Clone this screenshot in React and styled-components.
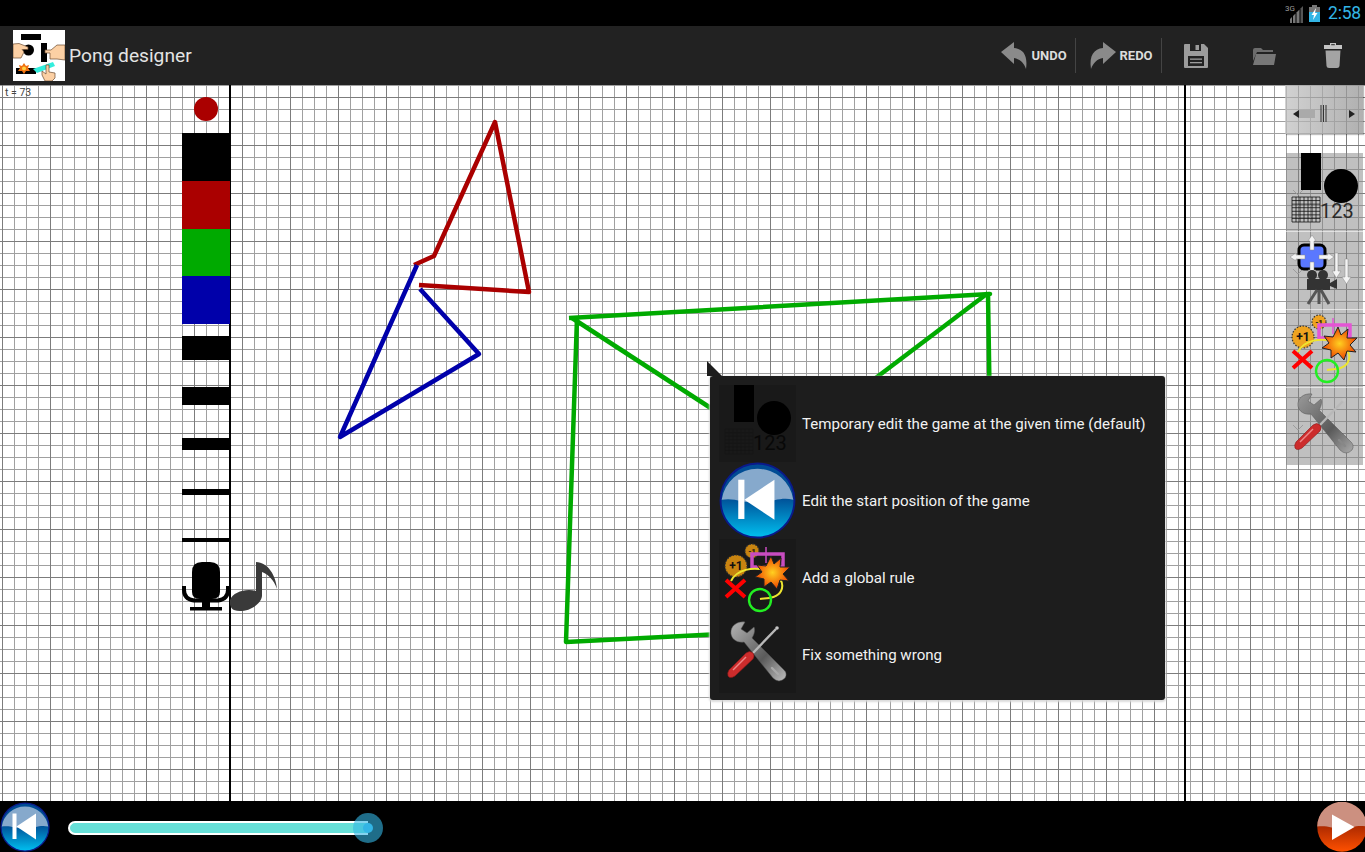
import React from "react";
import styled, { createGlobalStyle } from "styled-components";

const GlobalStyle = createGlobalStyle`
  html, body {
    margin: 0;
    padding: 0;
    background: #000;
    overflow: hidden;
  }
  body {
    font-family: Roboto, "Liberation Sans", sans-serif;
  }
`;

const Screen = styled.div`
  width: 1365px;
  height: 852px;
  display: flex;
  flex-direction: column;
  overflow: hidden;
`;

const StatusBar = styled.div`
  height: 26px;
  background: #000;
  display: flex;
  justify-content: flex-end;
  align-items: center;
  padding-right: 4px;
`;

const SignalBox = styled.div`
  position: relative;
  width: 19px;
  height: 20px;
  margin-right: 5px;
  svg { display: block; }
`;

const NetLabel = styled.span`
  position: absolute;
  left: 0;
  top: 1px;
  font-size: 8px;
  line-height: 9px;
  color: #9a9a9a;
`;

const Clock = styled.span`
  margin-left: 8px;
  font-size: 17.5px;
  color: #33b5e5;
  letter-spacing: -0.2px;
`;

const ActionBar = styled.div`
  height: 59px;
  margin-right: -2px;
  background: #222;
  display: flex;
  align-items: center;
`;

const Logo = styled.svg`
  margin-left: 13px;
  flex: none;
`;

const Title = styled.div`
  margin-left: 4px;
  font-size: 19.2px;
  color: #e4e4e4;
  flex: 1;
`;

const TextAction = styled.div`
  display: flex;
  align-items: center;
  width: ${(p) => p.$w}px;
  height: 35px;
  padding-left: ${(p) => p.$pad}px;
  box-sizing: border-box;
  border-right: 1px solid #444;
  gap: 4px;
`;

const ActionLabel = styled.span`
  font-size: 13px;
  font-weight: 700;
  color: #dcdcdc;
`;

const IconAction = styled.div`
  width: 68.5px;
  display: flex;
  justify-content: center;
`;

const Canvas = styled.div`
  position: relative;
  flex: none;
  height: 716px;
  display: flex;
  background-color: #fff;
  background-image:
    linear-gradient(to right, #7c7c7c 1px, transparent 1px),
    linear-gradient(to bottom, #7c7c7c 1px, transparent 1px),
    linear-gradient(to right, #a0a0a0 1px, transparent 1px),
    linear-gradient(to bottom, #a0a0a0 1px, transparent 1px);
  background-size: 48px 48px, 48px 48px, 12px 12px, 12px 12px;
  background-position: 2px 0, 0 12px, 2px 0, 0 0;
`;

const TimeLabel = styled.div`
  position: absolute;
  left: 5px;
  top: 2px;
  font-size: 10.5px;
  line-height: 11px;
  color: #444;
  z-index: 2;
`;

const LeftGutter = styled.div`
  width: 229px;
  flex: none;
  display: flex;
  justify-content: flex-end;
  position: relative;
  z-index: 1;
`;

const Palette = styled.div`
  width: 48px;
  margin-right: -1px;
  display: flex;
  flex-direction: column;
  align-items: center;
  padding-top: 12px;
`;

const Dot = styled.div`
  width: 24px;
  height: 24px;
  border-radius: 50%;
  background: #aa0000;
  margin-bottom: 12px;
`;

const Swatch = styled.div`
  width: 48px;
  height: ${(p) => p.$h || 48}px;
  flex: none;
  background: ${(p) => p.$color};
`;

const WidthRow = styled.div`
  width: 48px;
  height: 48px;
  flex: none;
  display: flex;
  align-items: center;
`;

const WidthBar = styled.div`
  width: 100%;
  height: ${(p) => p.$h}px;
  background: #000;
`;

const SoundRow = styled.div`
  display: flex;
  width: 96px;
  align-self: flex-start;
  margin-top: -2px;
  svg { display: block; flex: none; }
`;

const Stage = styled.div`
  position: relative;
  width: 957px;
  flex: none;
  box-sizing: border-box;
  border-left: 2px solid #000;
  border-right: 2px solid #000;
`;

const Drawing = styled.svg`
  display: block;
  position: absolute;
  left: 0;
  top: 0;
`;

const RightGutter = styled.div`
  flex: 1;
  display: flex;
  flex-direction: column;
  align-items: flex-end;
  padding-right: 2px;
`;

const ScrollHandle = styled.div`
  width: 78px;
  height: 49px;
  background: linear-gradient(to right, rgba(190, 190, 190, 0.7), rgba(150, 150, 150, 0.75));
  box-shadow: 1px 1px 1px rgba(0, 0, 0, 0.25);
  display: flex;
  svg { display: block; }
`;

const ToolStack = styled.div`
  margin-top: 19px;
  width: 77px;
  display: flex;
  flex-direction: column;
  background: rgba(130, 130, 130, 0.5);
`;

const Tool = styled.div`
  height: 78px;
  box-sizing: border-box;
  border-top: ${(p) => (p.$first ? "0" : "1px solid rgba(255, 255, 255, 0.55)")};
  svg { display: block; }
`;

const Popup = styled.div`
  position: absolute;
  left: 710px;
  top: 291px;
  width: 455px;
  height: 324px;
  box-sizing: border-box;
  padding: 9px;
  background: #1d1d1d;
  border-radius: 3px;
  box-shadow: 0 1px 2px 1px rgba(215, 215, 215, 0.9);
  z-index: 3;
  &::before {
    content: "";
    position: absolute;
    left: -3px;
    top: -15px;
    border-style: solid;
    border-width: 15px 0 0 15px;
    border-color: transparent transparent transparent #1d1d1d;
  }
`;

const PopupRow = styled.div`
  display: flex;
  align-items: center;
  height: 77px;
  gap: 6px;
`;

const PopupIcon = styled.div`
  width: 77px;
  height: 77px;
  flex: none;
  background: ${(p) => (p.$plain ? "transparent" : "#191919")};
  svg { display: block; width: 77px; height: 77px; }
`;

const PopupText = styled.span`
  font-size: 15.1px;
  color: #f2f2f2;
  white-space: nowrap;
`;

const BottomBar = styled.div`
  height: 51px;
  margin-right: -2px;
  background: #000;
  display: flex;
  align-items: center;
  justify-content: space-between;
  svg { display: block; }
`;

const SliderWrap = styled.div`
  flex: 1;
  display: flex;
  align-items: center;
  padding: 2px 0 0 18px;
`;

const SliderTrack = styled.div`
  position: relative;
  width: 300px;
  height: 14px;
  box-sizing: border-box;
  background: #66e0d8;
  border: 2px solid #fff;
  border-right: 0;
  border-radius: 7px 0 0 7px;
`;

const SliderThumb = styled.div`
  position: absolute;
  right: -15px;
  top: -10px;
  width: 30px;
  height: 30px;
  border-radius: 50%;
  background: rgba(51, 181, 229, 0.6);
  display: flex;
  align-items: center;
  justify-content: center;
  &::after {
    content: "";
    width: 10px;
    height: 10px;
    border-radius: 50%;
    background: #33b5e5;
  }
`;

const Signal = () => (
  <SignalBox>
    <svg width="19" height="20" viewBox="0 0 19 20">
      <path d="M5 16 L7 14 V20 H5Z" fill="#777" />
      <path d="M8 13 L10.5 10.5 V20 H8Z" fill="#777" />
      <path d="M11.5 9.5 L14.5 6.5 V20 H11.5Z" fill="#777" />
      <path d="M15.5 5.5 L18 3 V20 H15.5Z" fill="#555" />
    </svg>
    <NetLabel>3G</NetLabel>
  </SignalBox>
);

const Battery = () => (
  <svg width="11" height="17" viewBox="0 0 11 17">
    <rect x="3" y="0" width="5" height="2" fill="#777" />
    <rect x="0" y="2" width="11" height="5" fill="#777" />
    <rect x="0" y="7" width="11" height="10" fill="#33b5e5" />
    <path d="M7 3 L2.5 10 H5 L4 15 L8.5 8 H6Z" fill="#fff" />
  </svg>
);

const AppLogo = () => (
  <Logo width="52" height="51" viewBox="0 0 52 51">
    <rect width="52" height="51" fill="#fff" />
    <rect x="8" y="4" width="20" height="6" fill="#000" />
    <circle cx="15.5" cy="20" r="5.5" fill="#000" />
    <path d="M0 14 L6 13.5 L15 17 V19.5 H9 L11 22 L8 28 H0Z" fill="#fcd0a4" stroke="#6a4a30" strokeWidth="0.7" />
    <rect x="28" y="13" width="6" height="19" fill="#000" />
    <path d="M52 15 L44 15 L38 20 H32 V23 H37 V29 H44 L52 30Z" fill="#fcd0a4" stroke="#6a4a30" strokeWidth="0.7" />
    <rect x="3" y="38" width="20" height="6" fill="#000" />
    <path d="M20 39 L40 32 L42 36 L24 43Z" fill="#33eedd" />
    <path d="M11 33 L13 36 L16 35 L15 38 L17 41 L13 41 L11 44 L9 41 L5 41 L7 38 L6 35 L9 36Z" fill="#f07010" />
    <circle cx="11" cy="38.5" r="2" fill="#ffd040" />
    <path d="M33 35 H36 V42 L42 43 L42 48 L39 51 H32 L29 45 V41 L33 44Z" fill="#fcd0a4" stroke="#6a4a30" strokeWidth="0.7" />
  </Logo>
);

const TurnArrow = ({ flip }) => (
  <svg width="27" height="28" viewBox="0 0 27 28">
    <g transform={flip ? "translate(27 0) scale(-1 1)" : undefined}>
      <path d="M0 10 L13 0 V6 C22 7 27 13 25 27 C23 21 19 17 13 16 V22Z" fill="#8a8a8a" />
    </g>
  </svg>
);

const SaveIcon = () => (
  <svg width="24" height="24" viewBox="0 0 24 24">
    <path d="M1 0 H20 L24 4 V23 Q24 24 23 24 H1 Q0 24 0 23 V1 Q0 0 1 0Z" fill="#9c9c9c" />
    <rect x="6" y="0" width="11" height="7" fill="#222" />
    <rect x="11.5" y="1" width="3.5" height="5" fill="#9c9c9c" />
    <rect x="4" y="12" width="16" height="10" fill="#222" />
    <rect x="6" y="14.5" width="12" height="1.3" fill="#9c9c9c" />
    <rect x="6" y="18" width="12" height="1.3" fill="#9c9c9c" />
  </svg>
);

const FolderIcon = () => (
  <svg width="24" height="18" viewBox="0 0 24 18">
    <path d="M1 3 Q1 1 3 1 H9 L11 3 H21 V5 H5 L1 14Z" fill="#6c6c6c" />
    <path d="M4 7 H24 L22 18 H1 Z" fill="#777" />
  </svg>
);

const TrashIcon = () => (
  <svg width="18" height="25" viewBox="0 0 18 25">
    <path d="M6 2 V0 H12 V2 H18 V6 H0 V2Z" fill="#c4c4c4" />
    <path d="M7.2 1.2 H10.8 V2.2 H7.2Z" fill="#222" />
    <path d="M1.5 7.5 H16.5 L15.5 23 Q15.3 25 13 25 H5 Q2.7 25 2.5 23Z" fill="#a4a4a4" />
  </svg>
);

const Mic = () => (
  <svg width="48" height="49" viewBox="0 0 48 49">
    <path d="M10 10 Q10 0 20 0 H28 Q38 0 38 10 V30 Q38 37 30 37 H18 Q10 37 10 30Z" fill="#000" />
    <path d="M2 24 V28 Q2 37 12 38.5 H36 Q46 37 46 28 V24" fill="none" stroke="#000" strokeWidth="4" />
    <rect x="20" y="38" width="8" height="8" fill="#000" />
    <rect x="8" y="45" width="32" height="3.5" fill="#000" />
  </svg>
);

const Note = () => (
  <svg width="48" height="50" viewBox="0 0 48 50">
    <path d="M0 38 C3 30 16 26 26 29 V0 C38 0 46 14 47 27 C44 18 38 12 32 10 V34 C31 44 14 52 4 48 C1 47 -1 42 0 38Z" fill="#3a3a3a" />
  </svg>
);

const Chevron = () => (
  <path d="M7 37 L12 42 L17 37" fill="none" stroke="#9c9c9c" strokeWidth="1" />
);

const ShapesIcon = ({ dark }) => {
  const lines = [];
  for (let i = 0; i <= 7; i++) {
    lines.push(<path key={"v" + i} d={`M${6 + i * 4} 44 V69`} stroke="#111" strokeWidth="0.8" />);
    lines.push(<path key={"h" + i} d={`M6 ${44 + (i * 25) / 7} H34`} stroke="#111" strokeWidth="0.8" />);
  }
  return (
    <svg width="77" height="77" viewBox="0 0 77 77">
      <rect x="15" y="0" width="20" height="37" fill="#000" />
      <circle cx="55" cy="33" r="17" fill="#000" />
      {!dark && <Chevron />}
      <g opacity={dark ? 0.55 : 1}>{lines}</g>
      <text x="34" y="65" fontFamily="Roboto, sans-serif" fontSize="20" fill={dark ? "#080808" : "#2a2a2a"}>123</text>
    </svg>
  );
};

const CrossArrow = ({ d }) => <path d={d} fill="#f4f4f4" stroke="#888" strokeWidth="0.5" />;

const CameraIcon = () => (
  <svg width="77" height="77" viewBox="0 0 77 77">
    <Chevron />
    <rect x="13" y="13" width="26" height="24" rx="5" fill="#5a78ff" stroke="#000" strokeWidth="3" />
    <CrossArrow d="M26 3 L30 9 H28 V18 H24 V9 H22Z" />
    <CrossArrow d="M26 44 L30 38 H28 V30 H24 V38 H22Z" />
    <CrossArrow d="M4 25 L10 21 V23 H19 V27 H10 V29Z" />
    <CrossArrow d="M48 25 L42 21 V23 H33 V27 H42 V29Z" />
    <CrossArrow d="M49 21 H52 V39 H55 L50.5 46 L46 39 H49Z" />
    <CrossArrow d="M59 27 H62 V45 H65 L60.5 52 L56 45 H59Z" />
    <circle cx="26" cy="43" r="5" fill="#333" />
    <circle cx="37" cy="43" r="5" fill="#333" />
    <rect x="21" y="47" width="23" height="11" fill="#333" />
    <path d="M44 51 L51 47 V57 L44 54Z" fill="#333" />
    <path d="M31 58 L22 72 M33 58 V72 M35 58 L43 72" stroke="#555" strokeWidth="3" fill="none" />
  </svg>
);

const Coin = ({ cx, cy, r, dim, size, label }) => (
  <g>
    <circle cx={cx} cy={cy} r={r} fill={dim ? "#c88410" : "#eea320"} stroke="#333" strokeWidth="1.2" strokeDasharray="1.5 1.5" />
    <text x={cx} y={cy + size / 2.8} textAnchor="middle" fontFamily="Roboto, sans-serif" fontWeight="700" fontSize={size} fill="#111">{label}</text>
  </g>
);

const RuleIcon = ({ dim }) => (
  <svg width="77" height="77" viewBox="0 0 77 77">
    <defs>
      <radialGradient id={dim ? "burstDim" : "burst"}>
        <stop offset="0" stopColor="#ffd020" />
        <stop offset="1" stopColor="#ee4400" />
      </radialGradient>
    </defs>
    <Coin cx={33} cy={12} r={7} dim={dim} size={8} label="-1" />
    <rect x="33" y="15" width="31" height="13" fill="none" stroke={dim ? "#c84cc0" : "#e455d4"} strokeWidth="3.5" />
    <path d="M47 8 V24" stroke={dim ? "#c84cc0" : "#e455d4"} strokeWidth="1.5" />
    <Coin cx={17} cy={27} r={11} dim={dim} size={12} label="+1" />
    <path d="M12 42 C18 30 34 28 46 31 C60 34 66 44 62 52 C58 60 46 59 41 60" fill="none" stroke="#eee530" strokeWidth="2" />
    <path d="M52 17 L55 25 L62 19 L61 28 L71 28 L64 35 L70 42 L61 41 L58 50 L52 43 L45 48 L45 40 L36 38 L43 33 L38 26 L47 27Z" fill={`url(#${dim ? "burstDim" : "burst"})`} stroke="#222" strokeWidth="1" />
    <path d="M7 41 L26 58 M26 41 L7 58" stroke="#ff0000" strokeWidth="4" />
    <circle cx="41" cy="61" r="11" fill="none" stroke="#22ee22" strokeWidth="2.4" />
  </svg>
);

const WrenchIcon = ({ bright }) => (
  <svg width="77" height="77" viewBox="0 0 77 77">
    <defs>
      <linearGradient id={bright ? "steelB" : "steelA"} x1="0" y1="0" x2="1" y2="1">
        <stop offset="0" stopColor={bright ? "#b4b4b4" : "#9a9a9a"} />
        <stop offset="0.6" stopColor="#5a5a5a" />
        <stop offset="1" stopColor={bright ? "#c0c0c0" : "#ababab"} />
      </linearGradient>
    </defs>
    {!bright && <Chevron />}
    <path
      d="M26 6 C18 5 11 10 12 18 C13 24 19 27 25 26 L54 62 Q60 68 66 62 Q69 57 64 53 L33 22 C36 17 36 13 35 11 L28 17 L22 13Z"
      fill={`url(#${bright ? "steelB" : "steelA"})`}
      stroke="#555"
      strokeWidth="0.5"
    />
    <path d="M53 52 L59 58" stroke={bright ? "#aaa" : "#888"} strokeWidth="2.4" strokeLinecap="round" />
    <path d="M34 37 L57 13" stroke="#b8b8b8" strokeWidth="2.4" />
    <circle cx="58" cy="12" r="1.8" fill="#c4c4c4" />
    <path d="M10 54 L27 37 Q31 34 34 37 Q36 40 34 43 L16 60 Q11 63 9 60 Q8 57 10 54Z" fill="#cc2c2c" stroke="#8a1818" strokeWidth="0.6" />
    <path d="M14 54 L27 41" stroke="#ee8888" strokeWidth="1.4" />
  </svg>
);

const Ball = ({ id, top, low, high, rim, children }) => (
  <svg width="50" height="50" viewBox="0 0 100 100">
    <defs>
      <linearGradient id={id} x1="0" y1="0.45" x2="0" y2="1">
        <stop offset="0" stopColor={low} />
        <stop offset="1" stopColor={high} />
      </linearGradient>
    </defs>
    <circle cx="50" cy="50" r={rim ? 48 : 49.5} fill={`url(#${id})`} stroke={rim || "none"} strokeWidth="2.5" />
    <path
      d={rim
        ? "M3.5 49 A47 47 0 0 1 96.5 49 C80 45 70 52 50 53 C30 53 20 46 3.5 49Z"
        : "M0.5 49 A49.5 49.5 0 0 1 99.5 49 C80 45 70 52 50 53 C30 53 20 46 0.5 49Z"}
      fill={top}
    />
    {children}
  </svg>
);

const RewindBall = () => (
  <Ball id="rewind" top="#86a9cc" low="#004c94" high="#00c0f0" rim="#0a1a8a">
    <rect x="25" y="23" width="8" height="51" fill="#fff" />
    <path d="M72 23 V75 L33 49Z" fill="#fff" />
  </Ball>
);

const PlayBall = () => (
  <Ball id="play" top="#cc9080" low="#a82800" high="#ff5000">
    <path d="M30 25 V76 L75 50Z" fill="#fff" />
  </Ball>
);

const PopupItems = [
  { text: "Temporary edit the game at the given time (default)", icon: <ShapesIcon dark /> },
  { text: "Edit the start position of the game", icon: <RewindBall />, plain: true },
  { text: "Add a global rule", icon: <RuleIcon dim /> },
  { text: "Fix something wrong", icon: <WrenchIcon bright /> },
];

const App = () => {
  return (
    <Screen>
      <GlobalStyle />
      <StatusBar>
        <Signal />
        <Battery />
        <Clock>2:58</Clock>
      </StatusBar>
      <ActionBar>
        <AppLogo />
        <Title>Pong designer</Title>
        <TextAction $w={75} $pad={0}>
          <TurnArrow />
          <ActionLabel>UNDO</ActionLabel>
        </TextAction>
        <TextAction $w={86} $pad={13}>
          <TurnArrow flip />
          <ActionLabel>REDO</ActionLabel>
        </TextAction>
        <IconAction><SaveIcon /></IconAction>
        <IconAction><FolderIcon /></IconAction>
        <IconAction><TrashIcon /></IconAction>
      </ActionBar>
      <Canvas>
        <TimeLabel>t = 73</TimeLabel>
        <LeftGutter>
          <Palette>
            <Dot />
            <Swatch $color="#000" />
            <Swatch $color="#aa0000" />
            <Swatch $color="#00aa00" $h={47} />
            <Swatch $color="#0000aa" />
            {[24, 18, 12, 6, 4].map((h) => (
              <WidthRow key={h}><WidthBar $h={h} /></WidthRow>
            ))}
            <SoundRow>
              <Mic />
              <Note />
            </SoundRow>
          </Palette>
        </LeftGutter>
        <Stage>
          <Drawing width="953" height="716" viewBox="231 85 953 716">
            <g fill="none" strokeWidth="4.5" strokeLinejoin="round">
              <polyline points="414,265 434,256 495,122 529,292 419,285" stroke="#aa0000" />
              <polyline points="417,265 340,437 479,354 420,289" stroke="#0000aa" />
              <polyline points="569,318 990,294 988,294 990,420" stroke="#00aa00" />
              <polyline points="577,318 566,642 760,632" stroke="#00aa00" />
              <polyline points="572,318 760,440" stroke="#00aa00" />
              <polyline points="988,293 840,405" stroke="#00aa00" />
            </g>
          </Drawing>
        </Stage>
        <RightGutter>
          <ScrollHandle>
            <svg width="78" height="49" viewBox="0 0 78 49">
              <path d="M8 29 L14 25 V33Z" fill="#222" />
              <rect x="14" y="25" width="16" height="8" fill="#aaa" />
              <path d="M36 20 V37 M38.5 20 V37 M41 20 V37" stroke="#333" strokeWidth="1" />
              <path d="M70 29 L64 25 V33Z" fill="#222" />
            </svg>
          </ScrollHandle>
          <ToolStack>
            <Tool $first><ShapesIcon /></Tool>
            <Tool><CameraIcon /></Tool>
            <Tool><RuleIcon /></Tool>
            <Tool><WrenchIcon /></Tool>
          </ToolStack>
        </RightGutter>
        <Popup>
          {PopupItems.map((item) => (
            <PopupRow key={item.text}>
              <PopupIcon $plain={item.plain}>{item.icon}</PopupIcon>
              <PopupText>{item.text}</PopupText>
            </PopupRow>
          ))}
        </Popup>
      </Canvas>
      <BottomBar>
        <RewindBall />
        <SliderWrap>
          <SliderTrack>
            <SliderThumb />
          </SliderTrack>
        </SliderWrap>
        <PlayBall />
      </BottomBar>
    </Screen>
  );
};

export default App;
